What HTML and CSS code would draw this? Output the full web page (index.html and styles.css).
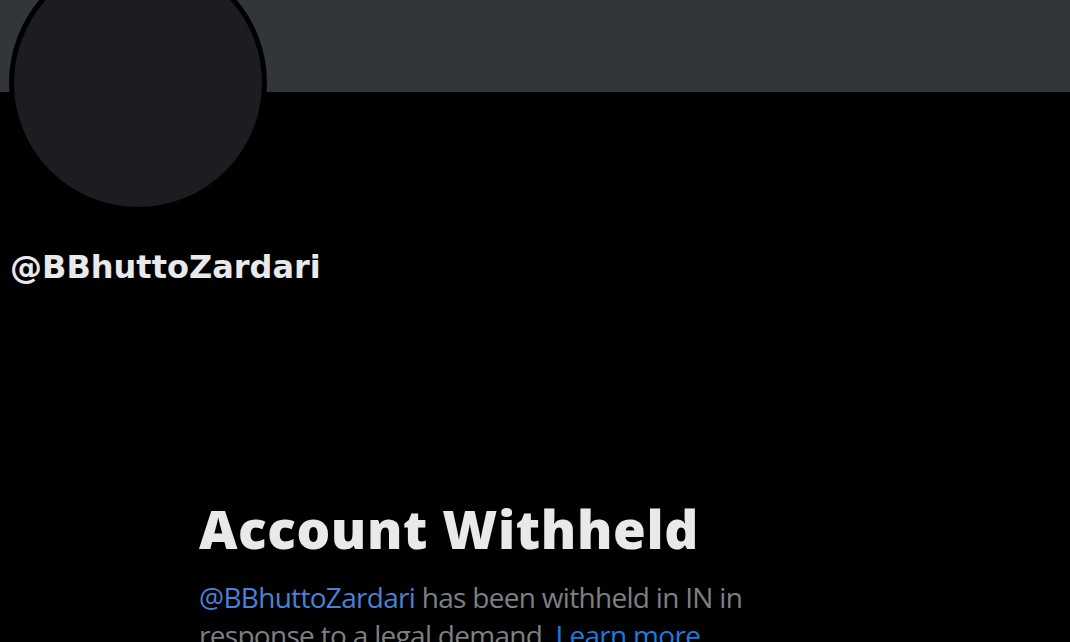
FILE: index.html
```html
<!DOCTYPE html>
<html>
<head>
<meta charset="utf-8">
<link rel="stylesheet" href="styles.css">
</head>
<body>
<div class="banner"></div>
<div class="profile">
  <div class="avatar"></div>
  <div class="handle">@BBhuttoZardari</div>
</div>
<div class="notice">
  <h1 class="title">Account Withheld</h1>
  <p class="desc"><span class="link">@BBhuttoZardari</span> has been withheld in IN in response to a legal demand. <span class="link learn">Learn more.</span></p>
</div>
</body>
</html>
```
FILE: styles.css
```css
html, body {
  margin: 0;
  padding: 0;
  background: #000;
  overflow: hidden;
}
body {
  font-family: "Open Sans", "Noto Sans", sans-serif;
  color: #e7e9ea;
  width: 1070px;
  height: 642px;
}
.banner {
  height: 92px;
  background: #333639;
}
.profile {
  display: flex;
  flex-direction: column;
  align-items: flex-start;
}
.avatar {
  width: 248px;
  height: 248px;
  border: 5px solid #000;
  border-radius: 50%;
  background: #1c1d20;
  margin: -138px 0 0 9px;
}
.handle {
  margin: 35px 0 0 10px;
  font-family: "DejaVu Sans", "Open Sans", sans-serif;
  font-size: 32px;
  font-weight: 700;
  line-height: 40px;
}
.notice {
  margin: 209px 0 0 199px;
  width: 580px;
}
.title {
  margin: 0;
  font-size: 53px;
  font-weight: 800;
  line-height: 66px;
  letter-spacing: 0.6px;
}
.desc {
  margin: 16px 0 0 0;
  font-size: 28px;
  line-height: 38px;
  letter-spacing: -0.7px;
  color: #7c8084;
}
.link {
  color: #4a80d8;
}
.learn {
  color: #1d7ae0;
}
```
